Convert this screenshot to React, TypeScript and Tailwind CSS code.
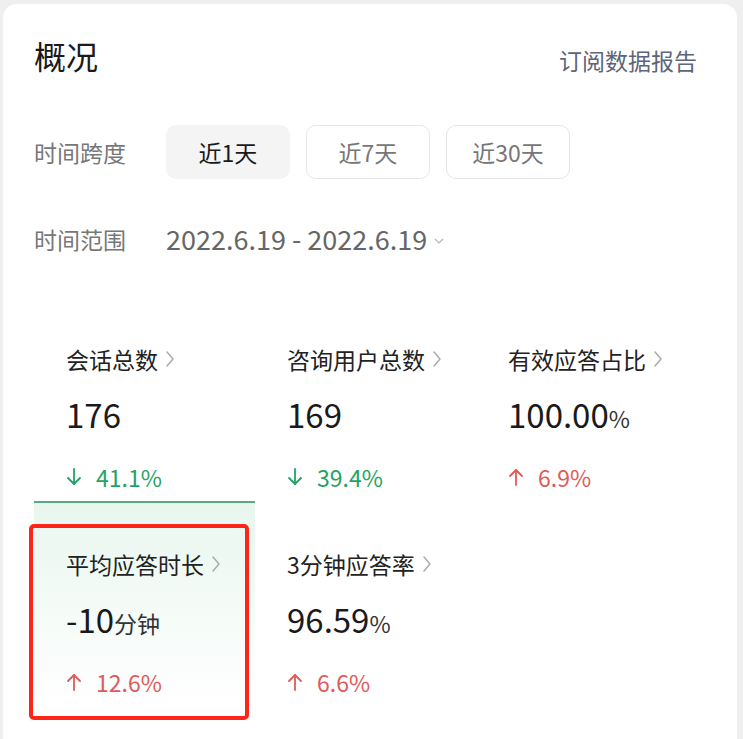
import React from 'react';

const Chevron = () => (
  <svg width="12" height="20" viewBox="0 0 12 20" className="ml-[6px] shrink-0" fill="none">
    <polyline points="3,3 9,10 3,17" stroke="#ababab" strokeWidth="1.5" strokeLinecap="round" strokeLinejoin="round" />
  </svg>
);

const Arrow = ({ up }: { up: boolean }) => (
  <svg width="16" height="20" viewBox="0 0 16 20" fill="none" className="shrink-0">
    {up ? (
      <g stroke="#e05a5a" strokeWidth="1.8" strokeLinecap="round" strokeLinejoin="round">
        <line x1="8" y1="3" x2="8" y2="18" />
        <polyline points="2,9 8,3 14,9" />
      </g>
    ) : (
      <g stroke="#1fa463" strokeWidth="1.8" strokeLinecap="round" strokeLinejoin="round">
        <line x1="8" y1="2" x2="8" y2="17" />
        <polyline points="2,11 8,17 14,11" />
      </g>
    )}
  </svg>
);

type Stat = { title: string; value: string; unit?: string; change: string; up: boolean; active?: boolean };

const stats: Stat[] = [
  { title: '会话总数', value: '176', change: '41.1%', up: false },
  { title: '咨询用户总数', value: '169', change: '39.4%', up: false },
  { title: '有效应答占比', value: '100.00', unit: '%', change: '6.9%', up: true },
  { title: '平均应答时长', value: '-10', unit: '分钟', change: '12.6%', up: true, active: true },
  { title: '3分钟应答率', value: '96.59', unit: '%', change: '6.6%', up: true },
];

const StatCell = ({ s }: { s: Stat }) => (
  <div
    className={
      s.active
        ? 'relative h-[205px] pl-[32px] pt-[45px] border-t-2 border-[#55ab85] bg-gradient-to-b from-[#e8f6ee] via-[#f4fbf7] to-white'
        : 'relative h-[205px] pl-[32px] pt-[45px] border-t-2 border-transparent'
    }
  >
    <div className="flex items-center h-[32px] text-[23px] text-[#222]">
      <span>{s.title}</span>
      <Chevron />
    </div>
    <div className="mt-[17px] flex items-baseline h-[44px] leading-[44px] text-[#1a1a1a]">
      <span className="text-[33px]">{s.value}</span>
      {s.unit && <span className="text-[23px] text-[#333]">{s.unit}</span>}
    </div>
    <div className={`mt-[25px] flex items-center h-[32px] text-[23px] ${s.up ? 'text-[#e05a5a]' : 'text-[#1fa463]'}`}>
      <Arrow up={s.up} />
      <span className="ml-[14px]">{s.change}</span>
    </div>
    {s.active && (
      <div className="absolute left-[-5px] top-[21px] w-[220px] h-[196px] border-4 border-[#ff2419] rounded-[5px]" />
    )}
  </div>
);

export default function App() {
  return (
    <div
      className="min-h-screen bg-[#efefef] pt-[4px] pl-[3px] overflow-hidden"
      style={{ fontFamily: '"Noto Sans CJK SC", "Noto Sans", sans-serif' }}
    >
      <div className="w-[734px] min-h-[760px] bg-white rounded-[14px] pl-[31px] pr-[40px] pt-[29px]">
        <div className="flex items-end justify-between h-[44px]">
          <h1 className="text-[32px] leading-[44px] text-[#1a1a1a]">概况</h1>
          <span className="text-[23px] leading-[32px] text-[#5c6579] mb-[1px]">订阅数据报告</span>
        </div>

        <div className="mt-[48px] flex items-center">
          <span className="w-[132px] text-[23px] text-[#777]">时间跨度</span>
          <div className="flex gap-[16px]">
            <button className="w-[124px] h-[54px] rounded-[10px] bg-[#f4f4f4] text-[23px] text-[#1a1a1a]">近1天</button>
            <button className="w-[124px] h-[54px] rounded-[10px] border border-[#e6e6e6] text-[23px] text-[#777]">近7天</button>
            <button className="w-[124px] h-[54px] rounded-[10px] border border-[#e6e6e6] text-[23px] text-[#777]">近30天</button>
          </div>
        </div>

        <div className="mt-[40px] flex items-center h-[40px]">
          <span className="w-[132px] text-[23px] text-[#777]">时间范围</span>
          <span className="text-[27px] text-[#666]">2022.6.19 - 2022.6.19</span>
          <svg width="12" height="8" viewBox="0 0 12 8" className="ml-[6px] mt-[4px]" fill="none">
            <polyline points="2,2 6,6 10,2" stroke="#b5b5b5" strokeWidth="1.2" />
          </svg>
        </div>

        <div className="mt-[37px] grid grid-cols-3">
          {stats.map((s) => (
            <StatCell key={s.title} s={s} />
          ))}
        </div>
      </div>
    </div>
  );
}
